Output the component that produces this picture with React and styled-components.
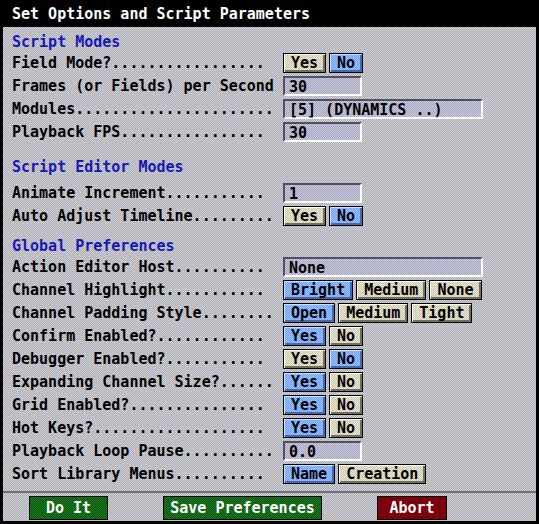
import React from 'react'
import styled, { createGlobalStyle, css } from 'styled-components';

const dither = (a, b) => css`
  background-color: ${a};
  background-image: repeating-conic-gradient(${a} 0 25%, ${b} 0 50%);
  background-size: 2px 2px;
`;

const GlobalStyle = createGlobalStyle`
  html, body { margin: 0; padding: 0; background: #000; }
  body {
    font-family: "DejaVu Sans Mono", "Liberation Mono", monospace;
    font-weight: bold;
    font-size: 15px;
  }
`;

const sections = [
  {
    title: 'Script Modes', top: 0, after: 3,
    rows: [
      { label: 'Field Mode?.................', buttons: ['Yes', 'No'], on: 'No' },
      { label: 'Frames (or Fields) per Second', field: '30' },
      { label: 'Modules......................', field: '[5] (DYNAMICS ..)', wide: true },
      { label: 'Playback FPS................', field: '30' },
    ],
  },
  {
    title: 'Script Editor Modes', top: 15, after: 8,
    rows: [
      { label: 'Animate Increment...........', field: '1' },
      { label: 'Auto Adjust Timeline.........', buttons: ['Yes', 'No'], on: 'No' },
    ],
  },
  {
    title: 'Global Preferences', top: 10, after: 3,
    rows: [
      { label: 'Action Editor Host..........', field: 'None', wide: true },
      { label: 'Channel Highlight...........', buttons: ['Bright', 'Medium', 'None'], on: 'Bright' },
      { label: 'Channel Padding Style........', buttons: ['Open', 'Medium', 'Tight'], on: 'Open' },
      { label: 'Confirm Enabled?............', buttons: ['Yes', 'No'], on: 'Yes' },
      { label: 'Debugger Enabled?...........', buttons: ['Yes', 'No'], on: 'No' },
      { label: 'Expanding Channel Size?......', buttons: ['Yes', 'No'], on: 'Yes' },
      { label: 'Grid Enabled?...............', buttons: ['Yes', 'No'], on: 'Yes' },
      { label: 'Hot Keys?...................', buttons: ['Yes', 'No'], on: 'Yes' },
      { label: 'Playback Loop Pause..........', field: '0.0' },
      { label: 'Sort Library Menus..........', buttons: ['Name', 'Creation'], on: 'Name' },
    ],
  },
];

const App = () => {
  return (
    <>
      <GlobalStyle />
      <Window>
        <TitleBar>Set Options and Script Parameters</TitleBar>
        <Body>
          {sections.map((s) => (
            <Section key={s.title} $top={s.top}>
              <Header $after={s.after}>{s.title}</Header>
              {s.rows.map((r) => (
                <Row key={r.label}>
                  <Label>{r.label}</Label>
                  {r.field !== undefined ? (
                    <Field $wide={r.wide}>{r.field}</Field>
                  ) : (
                    <Choices>
                      {r.buttons.map((b) => (
                        <Choice key={b} $on={b === r.on}>{b}</Choice>
                      ))}
                    </Choices>
                  )}
                </Row>
              ))}
            </Section>
          ))}
        </Body>
        <Footer>
          <Action $kind="go" $w={79}>Do It</Action>
          <Action $kind="go" $w={159}>Save Preferences</Action>
          <Action $kind="stop" $w={70}>Abort</Action>
        </Footer>
      </Window>
    </>
  )
}

export default App;

const Window = styled.div`
  width: 539px;
  height: 524px;
  box-sizing: border-box;
  border: 3px solid #000;
  border-top: none;
  display: flex;
  flex-direction: column;
  ${dither('#d2d2da', '#acacb0')}
`;

const TitleBar = styled.div`
  height: 27px;
  line-height: 28px;
  background: #000;
  color: #fff;
  margin: 0 -3px;
  padding-left: 12px;
  white-space: pre;
`;

const Body = styled.div`
  flex: 1;
  padding: 5px 0 0 9px;
  display: flex;
  flex-direction: column;
`;

const Section = styled.div`
  margin-top: ${p => p.$top}px;
  display: flex;
  flex-direction: column;
  gap: 3px;
`;

const Header = styled.div`
  height: 18px;
  line-height: 20px;
  color: #1818b8;
  margin-bottom: ${p => p.$after - 3}px;
`;

const Row = styled.div`
  display: flex;
  align-items: center;
  height: 20px;
`;

const Label = styled.div`
  width: 271px;
  color: #000;
  white-space: pre;
  line-height: 22px;
`;

const Choices = styled.div`
  display: flex;
  gap: 3px;
`;

const Choice = styled.div`
  height: 20px;
  box-sizing: border-box;
  padding: 0 7px;
  border: 1px solid #000;
  line-height: 19px;
  color: #000;
  ${p => p.$on ? dither('#98c4ff', '#70a0f8') : dither('#ece8d4', '#cac6ae')}
  box-shadow: inset 1px 1px 0 ${p => p.$on ? '#c8e0ff' : '#fffff0'},
    inset -2px -2px 0 ${p => p.$on ? '#4868a8' : '#707060'};
`;

const Field = styled.div`
  width: ${p => p.$wide ? 200 : 79}px;
  height: 20px;
  box-sizing: border-box;
  padding-left: 4px;
  line-height: 18px;
  color: #000;
  border-top: 2px solid #505060;
  border-left: 2px solid #505060;
  border-bottom: 2px solid #fff;
  border-right: 2px solid #fff;
  ${dither('#c8c8e0', '#a8a8bc')}
`;

const Footer = styled.div`
  height: 30px;
  box-sizing: border-box;
  border-top: 2px solid #707070;
  padding: 3px 0 0 26px;
  display: flex;
  gap: 55px;
  align-items: flex-start;
`;

const Action = styled.div`
  width: ${p => p.$w}px;
  height: 24px;
  box-sizing: border-box;
  border: 1px solid #000;
  color: #fff;
  text-align: center;
  line-height: 23px;
  white-space: pre;
  ${p => p.$kind === 'stop' ? dither('#900010', '#680008') : dither('#18801c', '#0c5010')}
`;
